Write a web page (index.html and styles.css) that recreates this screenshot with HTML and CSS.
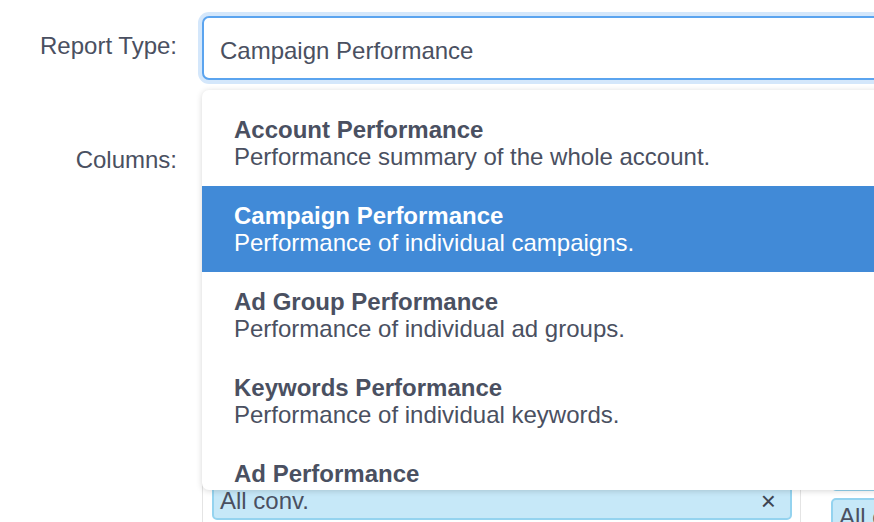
FILE: index.html
```html
<!DOCTYPE html>
<html>
<head>
<meta charset="utf-8">
<link rel="stylesheet" href="styles.css">
</head>
<body>
<div class="form">
  <div class="row row-type">
    <label class="label label-type">Report Type:</label>
    <div class="field">
      <div class="select">Campaign Performance</div>
      <ul class="menu">
        <li class="item"><div class="title">Account Performance</div><div class="desc">Performance summary of the whole account.</div></li>
        <li class="item active"><div class="title">Campaign Performance</div><div class="desc">Performance of individual campaigns.</div></li>
        <li class="item"><div class="title">Ad Group Performance</div><div class="desc">Performance of individual ad groups.</div></li>
        <li class="item"><div class="title">Keywords Performance</div><div class="desc">Performance of individual keywords.</div></li>
        <li class="item"><div class="title">Ad Performance</div><div class="desc">Performance of individual ads.</div></li>
      </ul>
    </div>
  </div>
  <div class="row row-cols">
    <label class="label label-cols">Columns:</label>
    <div class="columns">
      <div class="col col-left">
        <div class="tag"><span class="tag-text">All conv.</span><span class="x">×</span></div>
      </div>
      <div class="col col-right">
        <div class="tag"><span class="tag-text">Conv. value</span><span class="x">×</span></div>
        <div class="tag"><span class="tag-text">All conv.</span><span class="x">×</span></div>
      </div>
    </div>
  </div>
</div>
</body>
</html>
```
FILE: styles.css
```css
html, body {
  margin: 0;
  padding: 0;
  height: 522px;
  overflow: hidden;
  background: #ffffff;
}
body {
  font-family: "Liberation Sans", Arial, Helvetica, sans-serif;
  font-size: 24px;
  color: #4a5061;
}
.form {
  padding-top: 16px;
  display: flex;
  flex-direction: column;
}
.row {
  display: grid;
  grid-template-columns: 177px 720px;
  column-gap: 25px;
  align-items: start;
}
.label {
  text-align: right;
  white-space: nowrap;
}
.label-type {
  line-height: 60px;
}
.field {
  position: relative;
  z-index: 2;
}
.select {
  box-sizing: border-box;
  height: 64px;
  border: 2px solid #5ba4ef;
  border-radius: 7px;
  box-shadow: 0 0 0 4px #d4e7fb;
  padding: 4px 16px 0;
  line-height: 58px;
  background: #fff;
}
.menu {
  position: absolute;
  left: 0;
  top: 74px;
  width: 100%;
  margin: 0;
  padding: 10px 0;
  list-style: none;
  background: #fff;
  border-radius: 7px;
  box-shadow: 0 1px 6px rgba(0, 0, 0, 0.16);
  height: 380px;
  overflow: hidden;
}
.item {
  padding: 16px 33px 16px 32px;
  line-height: 27px;
}
.title {
  font-weight: bold;
}
.item.active {
  background: #418ad7;
  color: #ffffff;
}
.row-cols {
  margin-top: 20px;
}
.label-cols {
  padding-top: 46px;
  line-height: 27px;
}
.columns {
  display: flex;
  height: 440px;
}
.col {
  display: flex;
  flex-direction: column;
  gap: 7px;
  border-left: 1px solid #e4e4e4;
  box-sizing: border-box;
  flex-shrink: 0;
}
.col-left {
  width: 598px;
  padding: 382px 8px 0 9px;
}
.col-right {
  width: 300px;
  padding: 353px 8px 0 30px;
}
.tag {
  box-sizing: border-box;
  height: 38px;
  border: 2px solid #94d3ef;
  border-radius: 5px;
  background: #c6e8f8;
  padding: 0 14px 0 6px;
  line-height: 34px;
  display: flex;
  justify-content: space-between;
  white-space: nowrap;
  flex-shrink: 0;
}
.x {
  font-size: 26px;
  color: #3d4452;
}
```
